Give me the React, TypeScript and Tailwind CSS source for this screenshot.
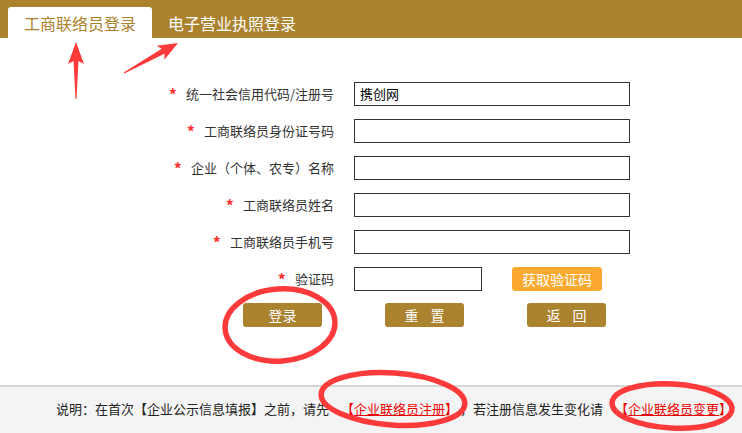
import React from 'react';

const fields = [
  { label: '统一社会信用代码/注册号', value: '携创网' },
  { label: '工商联络员身份证号码', value: '' },
  { label: '企业（个体、农专）名称', value: '' },
  { label: '工商联络员姓名', value: '' },
  { label: '工商联络员手机号', value: '' },
];

function Star() {
  return <span className="mr-[9px] text-[16px] font-bold leading-none text-[#f33]">*</span>;
}

function GoldButton({ chars }: { chars: string[] }) {
  return (
    <button className="flex h-6 w-[79px] items-center justify-center gap-[12px] rounded-[3px] bg-[#ab822e] text-[14px] text-white">
      {chars.map((c) => (
        <span key={c}>{c}</span>
      ))}
    </button>
  );
}

function Annotations() {
  return (
    <svg
      className="pointer-events-none absolute inset-0"
      width="742"
      height="433"
      viewBox="0 0 742 433"
    >
      <g fill="#fe3a3a">
        <polygon points="76,42 84,64 78.5,61 76.5,99 75.5,99 73.5,61 68,64" />
        <polygon points="178,43 164.4,59.7 164.5,53.7 124.3,73.4 123.7,72.6 161.7,48.8 156.6,45.7" />
      </g>
      <g fill="none" stroke="#fe3a3a" strokeWidth="5.5">
        <ellipse cx="280" cy="325" rx="55" ry="36" transform="rotate(-4 280 325)" />
        <ellipse cx="393" cy="399" rx="72" ry="26" transform="rotate(4 393 399)" />
        <ellipse cx="672" cy="406" rx="60" ry="22" transform="rotate(3 672 406)" />
      </g>
    </svg>
  );
}

export default function App() {
  return (
    <div
      className="relative flex h-[433px] w-[742px] flex-col overflow-hidden bg-white text-[13px] text-[#333]"
      style={{ fontFamily: '"Noto Sans CJK SC", "Noto Sans", sans-serif' }}
    >
      <div className="flex h-[38px] items-end bg-[#ab822e] pl-2">
        <div className="flex h-[31px] items-center rounded-t-[3px] bg-white px-4 text-base text-[#ab822e]">
          工商联络员登录
        </div>
        <div className="flex h-[31px] items-center px-4 text-base text-white">电子营业执照登录</div>
      </div>

      <div className="flex-1 pt-[44px]">
        <div className="flex flex-col gap-[13px]">
          {fields.map((f) => (
            <div key={f.label} className="flex h-6 items-center">
              <div className="flex w-[334px] items-center justify-end">
                <Star />
                <span>{f.label}</span>
              </div>
              <div className="ml-5 flex h-6 w-[276px] items-center border border-[#333] px-[5px] text-[13px] text-black">
                {f.value}
              </div>
            </div>
          ))}
          <div className="flex h-6 items-center">
            <div className="flex w-[334px] items-center justify-end">
              <Star />
              <span>验证码</span>
            </div>
            <div className="ml-5 h-6 w-[128px] border border-[#333]" />
            <button className="ml-[30px] h-6 w-[90px] rounded-[3px] bg-[#fcaa2f] text-[14px] text-white">
              获取验证码
            </button>
          </div>
        </div>

        <div className="mt-3 flex gap-[63px] pl-[243px]">
          <GoldButton chars={['登录']} />
          <GoldButton chars={['重', '置']} />
          <GoldButton chars={['返', '回']} />
        </div>
      </div>

      <div className="flex h-[48px] items-center border-t-2 border-[#d6d6d6] bg-[#f4f4f4] pb-[2px] pl-[56px] text-[13px] text-[#222]">
        <span>说明：在首次【企业公示信息填报】之前，请先</span>
        <span className="ml-[12px] text-[#e00]">【</span>
        <a className="text-[#e00] underline">企业联络员注册</a>
        <span className="text-[#e00]">】</span>
        <span className="ml-[2px]">，若注册信息发生变化请</span>
        <span className="ml-[12px] text-[#e00]">【</span>
        <a className="text-[#e00] underline">企业联络员变更</a>
        <span className="text-[#e00]">】</span>
      </div>

      <Annotations />
    </div>
  );
}
